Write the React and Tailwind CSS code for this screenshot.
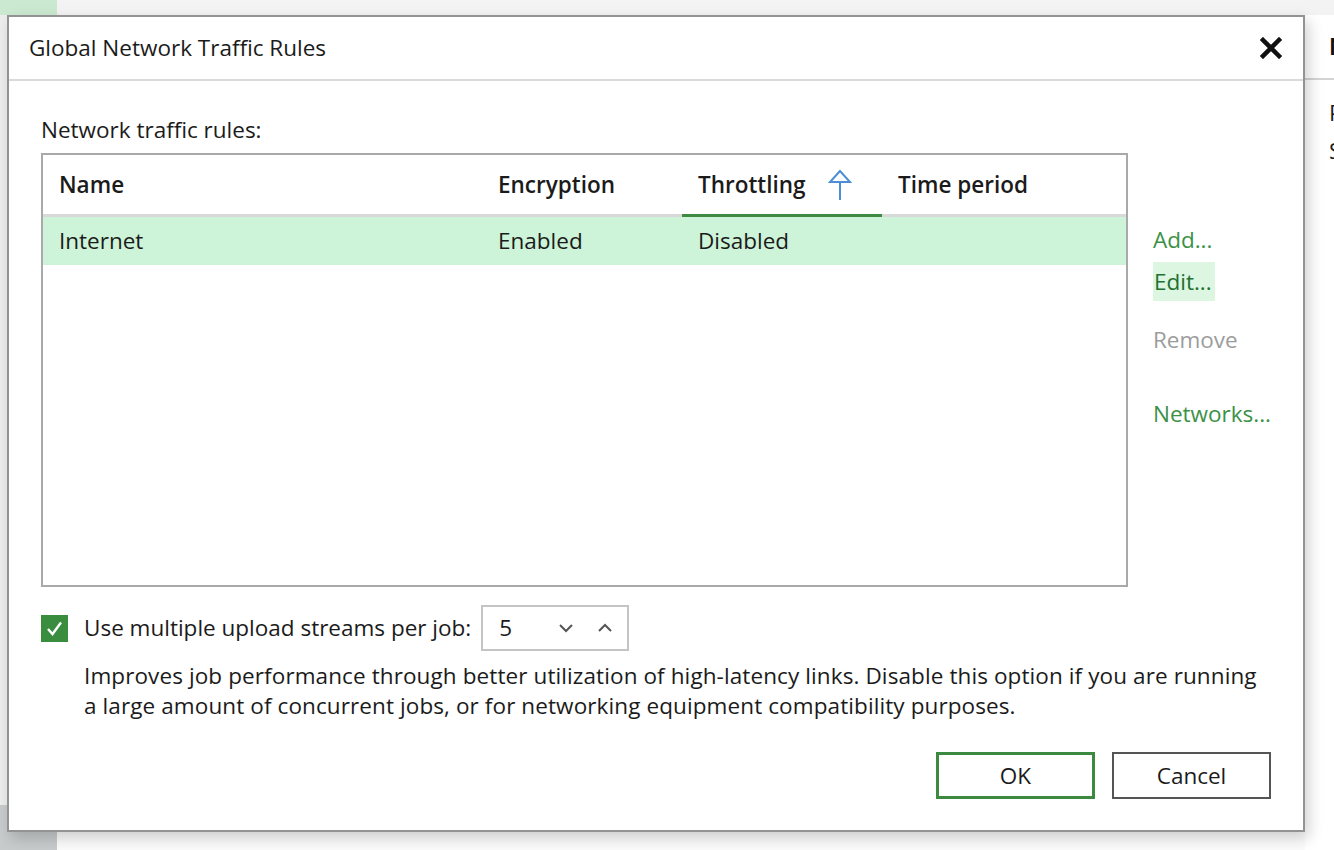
import React from "react";

const font = { fontFamily: '"Open Sans", "Noto Sans", sans-serif' };

function CloseIcon() {
  return (
    <svg width="22" height="22" viewBox="0 0 22 22">
      <path d="M3 3 L19 19 M19 3 L3 19" stroke="#111" strokeWidth="4.5" strokeLinecap="square" fill="none" />
    </svg>
  );
}

function SortUp() {
  return (
    <svg width="24" height="32" viewBox="0 0 24 32">
      <path d="M12 2 L2 13 L22 13 Z" stroke="#4a8fd6" strokeWidth="2" fill="none" strokeLinejoin="miter" />
      <path d="M12 13 V31" stroke="#4a8fd6" strokeWidth="2" fill="none" />
    </svg>
  );
}

function Chevron({ up }) {
  return (
    <svg width="16" height="10" viewBox="0 0 16 10">
      <path d={up ? "M2 8 L8 2 L14 8" : "M2 2 L8 8 L14 2"} stroke="#555" strokeWidth="2" fill="none" />
    </svg>
  );
}

function Check() {
  return (
    <svg width="27" height="27" viewBox="0 0 27 27">
      <rect x="0" y="0" width="27" height="27" fill="#3a8d3f" />
      <path d="M7 14 L11.5 19 L20 7.5" stroke="#fff" strokeWidth="2.4" fill="none" />
    </svg>
  );
}

export default function App() {
  return (
    <div className="relative w-[1334px] h-[850px] overflow-hidden bg-[#fbfbfb] text-[22.5px] text-[#1b1b1b]" style={font}>
      {/* background scene */}
      <div className="flex h-full w-full">
        <div className="flex w-[57px] flex-col">
          <div className="h-[15px] bg-[#cbe9d0]" />
          <div className="flex-1 bg-[#ededed]" />
          <div className="h-[45px] bg-[#c7cbcc]" />
        </div>
        <div className="flex flex-1 flex-col">
          <div className="h-[15px] bg-[#f3f3f3]" />
          <div className="flex flex-1">
            <div className="flex-1" />
            <div className="flex w-[29px] flex-col overflow-hidden bg-white pl-[24px]">
              <div className="flex h-[63px] items-center font-bold whitespace-nowrap text-[#111]">Name</div>
              <div className="h-[2px] -ml-[24px] bg-[#d4d4d4]" />
              <div className="pt-[10px] leading-[46px] whitespace-nowrap">Port</div>
              <div className="leading-[30px] whitespace-nowrap">Status</div>
            </div>
          </div>
        </div>
      </div>

      {/* dialog window */}
      <div className="absolute left-[7px] top-[15px] flex h-[817px] w-[1298px] flex-col border-2 border-[#939393] bg-white shadow-[4px_6px_14px_rgba(0,0,0,0.18)]">
        <div className="flex h-[62px] items-center justify-between pl-[20px] pr-[21px]">
          <div className="text-[#1b1b1b]">Global Network Traffic Rules</div>
          <CloseIcon />
        </div>
        <div className="h-[2px] bg-[#dadada]" />

        <div className="flex flex-col px-[32px] pt-[34px]">
          <div className="leading-[30px]">Network traffic rules:</div>

          <div className="mt-[8px] flex gap-[25px]">
            <div className="flex h-[434px] w-[1088px] flex-col border-2 border-[#a9a9a9]">
              <div className="grid grid-cols-[439px_200px_200px_1fr] font-semibold">
                <div className="flex h-[62px] items-center border-b-[3px] border-[#d9d9d9] pl-[16px]">Name</div>
                <div className="flex h-[62px] items-center border-b-[3px] border-[#d9d9d9] pl-[16px]">Encryption</div>
                <div className="flex h-[62px] items-center gap-[22px] border-b-[3px] border-[#3f8a43] pl-[16px]">
                  <span>Throttling</span>
                  <SortUp />
                </div>
                <div className="flex h-[62px] items-center border-b-[3px] border-[#d9d9d9] pl-[16px]">Time period</div>
              </div>
              <div className="grid h-[48px] grid-cols-[439px_200px_200px_1fr] items-center bg-[#cdf4d8]">
                <div className="pl-[16px]">Internet</div>
                <div className="pl-[16px]">Enabled</div>
                <div className="pl-[16px]">Disabled</div>
                <div />
              </div>
            </div>

            <div className="flex flex-col items-start pt-[72px]">
              <div className="leading-[30px] text-[#3b9146]">Add...</div>
              <div className="mt-[7px] flex h-[39px] items-center bg-[#dcf6e2] pl-[1px] pr-[3px] text-[#23702f]">Edit...</div>
              <div className="mt-[24px] leading-[30px] text-[#9c9c9c]">Remove</div>
              <div className="mt-[44px] leading-[30px] text-[#3b9146]">Networks...</div>
            </div>
          </div>

          <div className="mt-[18px] flex h-[46px] items-center">
            <Check />
            <div className="ml-[16px]">Use multiple upload streams per job:</div>
            <div className="ml-[10px] flex h-[46px] w-[148px] items-center border-2 border-[#c4c4c4] pl-[16px]">
              <span className="w-[60px]">5</span>
              <div className="ml-[-1px]"><Chevron /></div>
              <div className="ml-[23px]"><Chevron up /></div>
            </div>
          </div>

          <div className="mt-[10px] pl-[43px] leading-[30px] tracking-[0.1px]">
            <div>Improves job performance through better utilization of high-latency links. Disable this option if you are running</div>
            <div>a large amount of concurrent jobs, or for networking equipment compatibility purposes.</div>
          </div>

          <div className="mt-[31px] flex justify-end gap-[17px]">
            <div className="flex h-[47px] w-[159px] items-center justify-center border-[3px] border-[#3c8a40]">OK</div>
            <div className="flex h-[47px] w-[159px] items-center justify-center border-2 border-[#555555]">Cancel</div>
          </div>
        </div>
      </div>
    </div>
  );
}
